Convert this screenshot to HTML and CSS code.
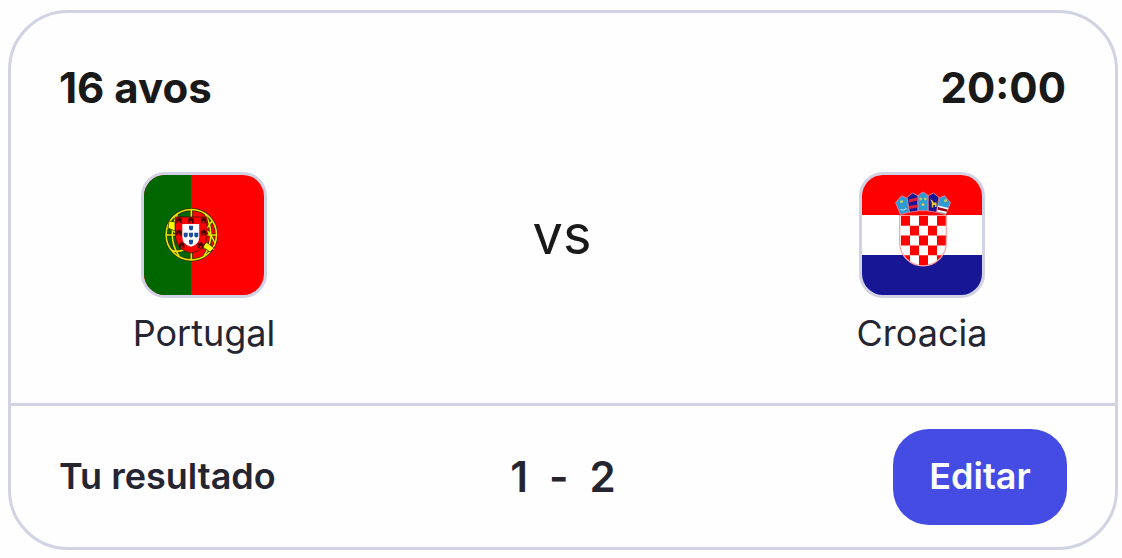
FILE: index.html
```
<!DOCTYPE html>
<html lang="es">
<head>
    <meta charset="UTF-8">
    <meta name="viewport" content="width=device-width, initial-scale=1.0">
    <title>Portugal vs Croacia</title>
    <link rel="stylesheet" href="styles.css">
</head>
<body>

    <article class="match-card">
        <header class="match-header">
            <span>16 avos</span>
            <time datetime="20:00">20:00</time>
        </header>

        <div class="match-teams">
            <div class="team">
                <svg class="flag" viewBox="0 0 120 120" aria-hidden="true">
                    <rect width="120" height="120" fill="#f00"/>
                    <rect width="47" height="120" fill="#060"/>
                    <!-- Armillary sphere -->
                    <g fill="none" stroke="#2b2b00" stroke-width="3">
                        <circle cx="47.3" cy="59.7" r="25.2"/>
                        <path d="M22.5 60H72M47.3 35V85M24 51Q47 73 70 74M29 42Q60 43 71 68M27 75Q43 83 68 46M34 38Q22 61 35 81M61 38Q73 61 60 81"/>
                    </g>
                    <g fill="none" stroke="#e9e400" stroke-width="1.6">
                        <circle cx="47.3" cy="59.7" r="25.2"/>
                        <path d="M22.5 60H72M47.3 35V85M24 51Q47 73 70 74M29 42Q60 43 71 68M27 75Q43 83 68 46M34 38Q22 61 35 81M61 38Q73 61 60 81"/>
                    </g>
                    <path d="M25 46L31 47 31 56 24 53ZM62 67L70 73 66 77 59 72Z" fill="#ff0" stroke="#2b2b00" stroke-width=".7"/>
                    <!-- Shield -->
                    <path d="M31.5 42H63V62Q62 75 47.3 78Q32.5 75 31.5 62Z" fill="#f00" stroke="#4b1608" stroke-width=".8"/>
                    <path d="M38.3 49H55.2V62Q55 70 47 71.7Q38.5 70 38.3 62Z" fill="#fff"/>
                    <g fill="#4a0500">
                        <path id="castle" d="M32.3 48.2V43.3H33.8V42.3H36.2V43.3H37.7V48.2H35.8V46H34.2V48.2Z"/>
                        <use href="#castle" x="12"/>
                        <use href="#castle" x="24.6"/>
                        <use href="#castle" y="12.4"/>
                        <use href="#castle" x="24.6" y="12.4"/>
                        <use href="#castle" x="2.7" y="25"/>
                        <use href="#castle" x="21.5" y="25"/>
                    </g>
                    <g fill="#1b4d9c">
                        <path id="quina" d="M45 50.7H49V53.5Q49 55.3 47 55.6Q45 55.3 45 53.5Z"/>
                        <use href="#quina" x="-5.3" y="7"/>
                        <use href="#quina" y="7"/>
                        <use href="#quina" x="5.3" y="7"/>
                        <use href="#quina" y="14"/>
                    </g>
                </svg>
                <span class="team-name">Portugal</span>
            </div>

            <span class="versus">vs</span>

            <div class="team">
                <svg class="flag" viewBox="0 0 120 120" aria-hidden="true">
                    <rect width="120" height="40" fill="#f00"/>
                    <rect y="40" width="120" height="40" fill="#fff"/>
                    <rect y="80" width="120" height="40" fill="#171796"/>
                    <!-- Checkered shield -->
                    <clipPath id="shield">
                        <path d="M37.7 40.5H84.3V67.5A23.3 23.3 0 0 1 37.7 67.5Z"/>
                    </clipPath>
                    <g clip-path="url(#shield)">
                        <rect x="37" y="40" width="48" height="52" fill="#fff"/>
                        <path d="M39 41h9v9.8h-9zM57 41h9v9.8h-9zM75 41h9v9.8h-9zM48 50.8h9v9.8h-9zM66 50.8h9v9.8h-9zM39 60.6h9v9.8h-9zM57 60.6h9v9.8h-9zM75 60.6h9v9.8h-9zM48 70.4h9v9.8h-9zM66 70.4h9v9.8h-9zM39 80.2h9v11h-9zM57 80.2h9v11h-9zM75 80.2h9v11h-9z" fill="#f00"/>
                    </g>
                    <path d="M37.7 40.5H84.3V67.5A23.3 23.3 0 0 1 37.7 67.5Z" fill="none" stroke="#ff9c9c" stroke-width="1.2"/>
                    <!-- Crown -->
                    <g stroke="#f58a96" stroke-width=".8" stroke-linejoin="round">
                        <path d="M33.5 27.7L39.5 20.7 46 23.5 47.5 37.2 38.5 39.5Z" fill="#2e9bd3"/>
                        <path d="M88.5 27.7L82.5 20.7 76 23.5 74.5 37.2 83.5 39.5Z" fill="#2e9bd3"/>
                        <path d="M45 22.5L50.5 18 56 20.8V36L47.5 37.3Z" fill="#171796"/>
                        <path d="M77 22.5L71.5 18 66 20.8V36L74.5 37.3Z" fill="#171796"/>
                        <path d="M56 20.5L61 16.8 66 20.5V35.8H56Z" fill="#2e9bd3"/>
                    </g>
                    <path d="M46.5 24.5L55.5 22.5V25.5L47 27.5ZM47 31L55.5 29.5V32.5L47.5 34Z" fill="#e0203a"/>
                    <path d="M76 30.5L86.5 33 84 38.5 75.3 36.5Z" fill="#fff"/>
                    <path d="M76 32L85.5 34.5 84.8 36.8 75.6 34.8Z" fill="#a00018"/>
                    <path d="M38.5 34.5Q41.5 36.5 44.5 33.5" fill="none" stroke="#d8edf8"/>
                    <g fill="#c3c95a">
                        <circle cx="39.5" cy="26.5" r="1.6"/>
                        <circle cx="58.7" cy="24" r="1.4"/>
                        <circle cx="63.3" cy="24" r="1.4"/>
                        <circle cx="61" cy="29.5" r="1.5"/>
                        <circle cx="83.5" cy="25.5" r="1.5"/>
                    </g>
                    <path d="M68.3 24L70.5 25.5 71.5 27.5H74.5V32H73V30H71.3V32.5H69.8V28Z" fill="#f2c72c"/>
                </svg>
                <span class="team-name">Croacia</span>
            </div>
        </div>

        <footer class="match-footer">
            <span class="result-label">Tu resultado</span>
            <div class="score">
                <span>1</span>
                <span>-</span>
                <span>2</span>
            </div>
            <button class="edit-button" type="button">Editar</button>
        </footer>
    </article>

</body>
</html>
```
FILE: styles.css
```
* {
    box-sizing: border-box;
}

body {
    margin: 0;
    padding: 10px 4px 8px 8px;
    background: #fefefe;
    font-family: Inter, "Liberation Sans", sans-serif;
    color: #252532;
}

/* Card */
.match-card {
    display: flex;
    flex-direction: column;
    height: 540px;
    border: 3px solid #d1d2e3;
    border-radius: 60px;
    background: #fefefe;
}

.match-header {
    display: flex;
    justify-content: space-between;
    padding: 48px 49px 0 48px;
    font-size: 42px;
    font-weight: 700;
    line-height: 54px;
    color: #191919;
}

/* Teams */
.match-teams {
    display: grid;
    grid-template-columns: 290px 1fr 288px;
    padding: 57px 49px 0 48px;
    flex: 1;
}

.team {
    display: flex;
    flex-direction: column;
    align-items: center;
    gap: 11px;
}

.flag {
    width: 126px;
    height: 126px;
    border: 3px solid #d1d2e5;
    border-radius: 24px;
}

.team-name {
    font-size: 36px;
    line-height: 48px;
}

.versus {
    padding-right: 3px;
    text-align: center;
    font-size: 54px;
    line-height: 126px;
    color: #191919;
}

/* Result */
.match-footer {
    display: grid;
    grid-template-columns: 1fr auto 1fr;
    align-items: center;
    height: 144px;
    padding: 0 48px;
    border-top: 3px solid #d1d2e3;
    font-size: 36px;
    font-weight: 600;
}

.result-label {
    padding-bottom: 2px;
}

.score {
    display: flex;
    gap: 21px;
    font-size: 42px;
}

.edit-button {
    justify-self: end;
    width: 174px;
    height: 96px;
    padding: 0 0 2px;
    border: none;
    border-radius: 36px;
    background: #444ce4;
    color: #fefefe;
    font: inherit;
    cursor: pointer;
}
```
